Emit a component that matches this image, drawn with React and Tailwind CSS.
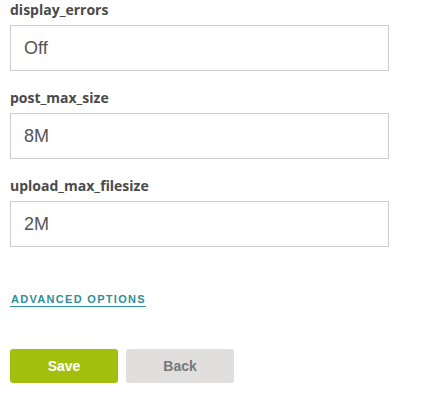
export default function App() {
  const fields = [
    { label: "display_errors", value: "Off" },
    { label: "post_max_size", value: "8M" },
    { label: "upload_max_filesize", value: "2M" },
  ];
  return (
    <div className="w-[431px] h-[401px] bg-white overflow-hidden pl-[10px]" style={{ fontFamily: '"Liberation Sans", Arial, sans-serif' }}>
      <div className="flex flex-col gap-[17px]">
        {fields.map((f) => (
          <div key={f.label} className="flex flex-col">
            <div className="h-[25px] pt-[1px] text-[14px] font-bold text-[#4a4a4a] leading-[18px]" style={{ fontFamily: '"Open Sans", sans-serif' }}>
              {f.label}
            </div>
            <div className="w-[379px] h-[46px] border border-[#cccccc] flex items-center pl-[13px] text-[18px] text-[#555555]">
              {f.value}
            </div>
          </div>
        ))}
      </div>
      <div className="mt-[39px] h-[16px]">
        <a className="inline-block text-[11px] font-bold tracking-[1.3px] text-[#2e8f97] leading-[13px] border-b-[1.5px] border-[#2e8f97] pl-[1px]">
          ADVANCED OPTIONS
        </a>
      </div>
      <div className="mt-[47px] flex gap-[8px]">
        <button className="w-[108px] h-[34px] rounded-[3px] bg-[#a3bf0d] text-white text-[14px] font-bold">Save</button>
        <button className="w-[108px] h-[34px] rounded-[3px] bg-[#e0dfde] text-[#777777] text-[14px] font-bold">Back</button>
      </div>
    </div>
  );
}
